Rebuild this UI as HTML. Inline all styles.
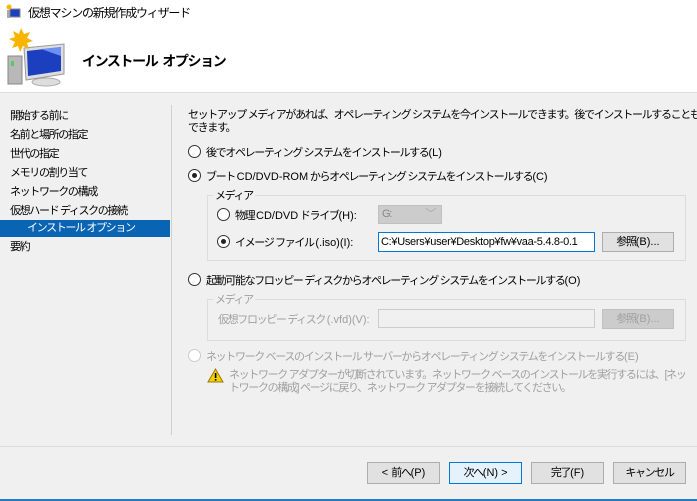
<!DOCTYPE html>
<html><head><meta charset="utf-8"><style>
*{margin:0;padding:0;box-sizing:border-box}
body{width:697px;height:501px;overflow:hidden;background:#f0f0f0;font-family:"Liberation Sans","Noto Sans CJK JP",sans-serif;font-size:11px;letter-spacing:-1.35px;color:#000;position:relative}
.l{letter-spacing:0}
.a{position:absolute;white-space:nowrap}
.hdr{position:absolute;left:0;top:0;width:697px;height:93px;background:#fff;border-bottom:1px solid #dcdcdc}
.rad{position:absolute;width:13px;height:13px;border:1px solid #333;border-radius:50%;background:#fff}
.rad.on::after{content:"";position:absolute;left:3px;top:3px;width:5px;height:5px;border-radius:50%;background:#222}
.rad.dis{border-color:#ccc}
.btn{position:absolute;height:22px;border:1px solid #adadad;background:#e1e1e1;text-align:center;line-height:20px}
.box{position:absolute;border:1px solid #dcdcdc}
.dis{color:#a0a0a0}
</style></head><body>
<div class="hdr"></div>
<svg class="a" style="left:6px;top:4px" width="16" height="16" viewBox="0 0 16 16"><rect x="1" y="6" width="3" height="8" fill="#aaa"/><rect x="4" y="5" width="10" height="8" fill="#1b3fbf" stroke="#888"/><circle cx="3" cy="3" r="2.5" fill="#f7b500"/></svg>
<div class="a" style="left:28px;top:4px;font-size:12px;letter-spacing:-1.2px">仮想マシンの新規作成ウィザード</div>
<svg class="a" style="left:6px;top:26px" width="62" height="62" viewBox="0 0 62 62">
<rect x="2" y="30" width="14" height="28" fill="#b8b8b8" stroke="#888"/><rect x="5" y="35" width="3" height="5" fill="#5c5"/>
<ellipse cx="40" cy="56" rx="14" ry="4" fill="#ddd" stroke="#aaa"/>
<path d="M18 22 L58 18 L58 48 L20 54 Z" fill="#ddd" stroke="#999"/>
<path d="M21 25 L55 21 L55 45 L22 50 Z" fill="#1b3fbf"/>
<path d="M35 23 L55 21 L55 30 Z" fill="#6c8ff0"/>
<path d="M15 2 l3 6 6-2-3 6 6 3-6 2 2 6-6-3-3 6-2-6-6 2 3-6-6-3 6-2-2-6 6 3z" fill="#f7b500"/>
</svg>
<div class="a" style="left:82px;top:51px;font-size:14px;letter-spacing:-1.4px;font-weight:bold">インストール&nbsp; オプション</div>

<div class="a" style="left:10px;top:107px;line-height:19px">開始する前に<br>名前と場所の指定<br>世代の指定<br>メモリの割り当て<br>ネットワークの構成<br>仮想ハード ディスクの接続</div>
<div class="a" style="left:0;top:220px;width:170px;height:17px;background:#0a64b4;color:#fff;padding-left:27px;line-height:17px">インストール オプション</div>
<div class="a" style="left:10px;top:238px">要約</div>
<div class="a" style="left:171px;top:105px;width:1px;height:330px;background:#d0d0d0"></div>

<div class="a" style="left:188px;top:109px;line-height:13px">セットアップ メディアがあれば、オペレーティング システムを今インストールできます。後でインストールすることも<br>できます。</div>
<div class="rad" style="left:188px;top:145px"></div><div class="a" style="left:206px;top:144px">後でオペレーティング システムをインストールする<span class="l">(L)</span></div>
<div class="rad on" style="left:188px;top:169px"></div><div class="a" style="left:206px;top:168px">ブート <span class="l">CD/DVD-ROM</span> からオペレーティング システムをインストールする<span class="l">(C)</span></div>
<div class="box" style="left:207px;top:195px;width:479px;height:66px"></div>
<div class="a" style="left:213px;top:187px;background:#f0f0f0;padding:0 2px">メディア</div>
<div class="rad" style="left:217px;top:208px"></div><div class="a" style="left:235px;top:207px">物理 <span class="l">CD/DVD</span> ドライブ<span class="l">(H):</span></div>
<div class="a" style="left:378px;top:205px;width:64px;height:19px;background:#cccccc;border:1px solid #c0c0c0;color:#888;padding-left:3px;line-height:17px">G:<span style="position:absolute;right:6px;top:0;color:#aaa">﹀</span></div>
<div class="rad on" style="left:217px;top:235px"></div><div class="a" style="left:235px;top:234px">イメージ ファイル <span class="l">(.iso)(I):</span></div>
<div class="a" style="left:378px;top:232px;width:217px;height:20px;background:#fff;border:1px solid #0078d7;padding-left:2px;line-height:18px;overflow:hidden;letter-spacing:-0.3px">C:¥Users¥user¥Desktop¥fw¥vaa-5.4.8-0.1</div>
<div class="btn" style="left:602px;top:232px;width:72px;height:20px;line-height:18px">参照<span class="l">(B)...</span></div>
<div class="rad" style="left:188px;top:273px"></div><div class="a" style="left:206px;top:272px">起動可能なフロッピー ディスクからオペレーティング システムをインストールする<span class="l">(O)</span></div>
<div class="box" style="left:207px;top:299px;width:479px;height:42px"></div>
<div class="a dis" style="left:213px;top:291px;background:#f0f0f0;padding:0 2px">メディア</div>
<div class="a dis" style="left:218px;top:311px">仮想フロッピー ディスク <span class="l">(.vfd)(V):</span></div>
<div class="a" style="left:378px;top:309px;width:217px;height:19px;background:#f0f0f0;border:1px solid #ccc"></div>
<div class="btn dis" style="left:602px;top:309px;width:72px;height:20px;line-height:18px;background:#ccc;border-color:#bfbfbf">参照<span class="l">(B)...</span></div>
<div class="rad dis" style="left:188px;top:349px"></div><div class="a dis" style="left:206px;top:348px">ネットワーク ベースのインストール サーバーからオペレーティング システムをインストールする<span class="l">(E)</span></div>
<svg class="a" style="left:207px;top:368px" width="17" height="15" viewBox="0 0 17 15"><path d="M8.5 1 L16 14 L1 14 Z" fill="#f5d000" stroke="#9a7a00"/><rect x="7.8" y="5" width="1.6" height="5" fill="#000"/><rect x="7.8" y="11" width="1.6" height="1.6" fill="#000"/></svg>
<div class="a dis" style="left:229px;top:369px;line-height:13px">ネットワーク アダプターが切断されています。ネットワーク ベースのインストールを実行するには、[ネッ<br>トワークの構成] ページに戻り、ネットワーク アダプターを接続してください。</div>

<div class="a" style="left:0;top:446px;width:697px;height:1px;background:#dcdcdc"></div>
<div class="btn" style="left:367px;top:462px;width:73px"><span class="l">&lt; </span>前へ<span class="l">(P)</span></div>
<div class="btn" style="left:449px;top:462px;width:73px;border-color:#0078d7;background:#e5f1fb">次へ<span class="l">(N) &gt;</span></div>
<div class="btn" style="left:531px;top:462px;width:73px">完了<span class="l">(F)</span></div>
<div class="btn" style="left:613px;top:462px;width:73px">キャンセル</div>
<div class="a" style="left:0;top:499px;width:697px;height:2px;background:#2b79c2"></div>
</body></html>
